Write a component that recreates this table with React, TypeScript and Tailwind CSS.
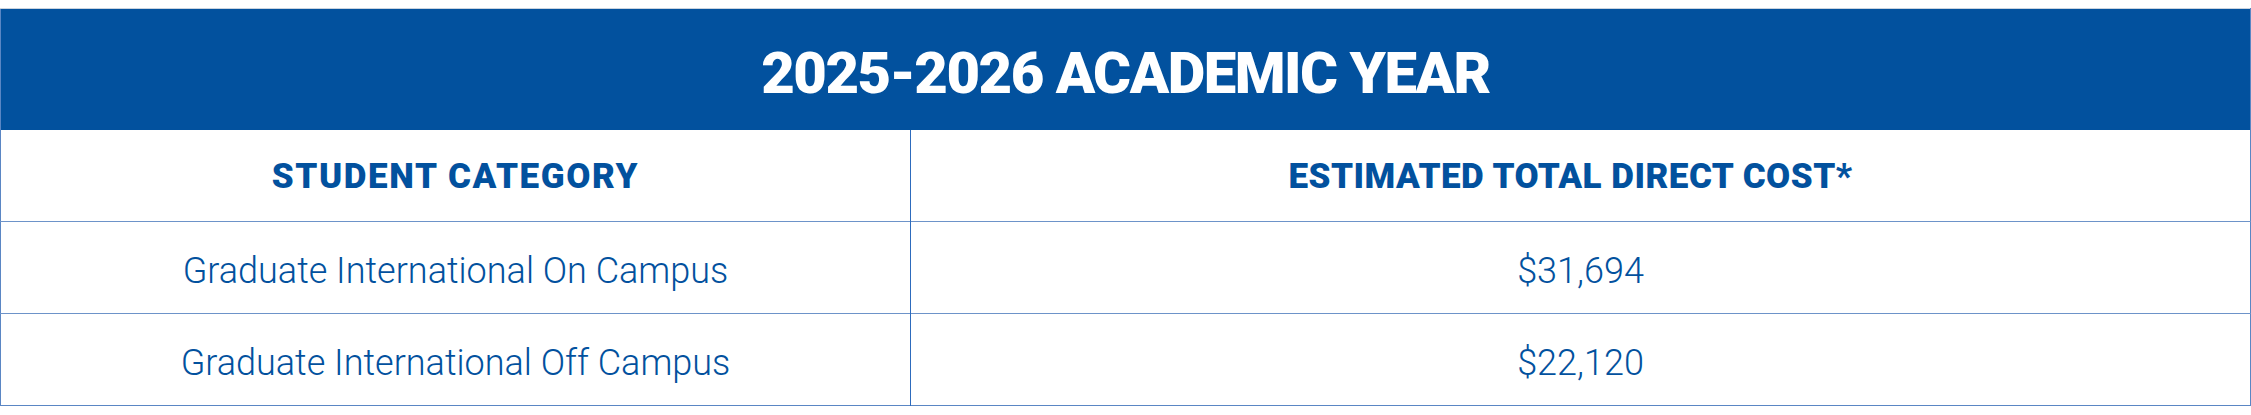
const rows = [
  { category: "Graduate International On Campus", cost: "$31,694" },
  { category: "Graduate International Off Campus", cost: "$22,120" },
];

export default function App() {
  return (
    <div className="min-h-screen bg-white pt-[8px] font-['Roboto',sans-serif]">
      <table className="w-full border-collapse border border-[#5a86c4] border-t-[#c9d3df]">
        <thead>
          <tr>
            <th
              colSpan={2}
              className="h-[121px] bg-[#02519e] pt-[8px] text-center text-[58px] font-black uppercase leading-none tracking-[-1.5px] text-white"
            >
              2025-2026 Academic Year
            </th>
          </tr>
          <tr className="h-[92px]">
            <th className="w-[910px] border-r border-[#2d6bbd] pt-[2px] text-center text-[35px] font-black uppercase leading-none tracking-[1.6px] text-[#02519e]">
              Student Category
            </th>
            <th className="pt-[2px] pr-[20px] text-center text-[35px] font-black uppercase leading-none tracking-[0.5px] text-[#02519e]">
              Estimated Total Direct Cost*
            </th>
          </tr>
        </thead>
        <tbody>
          {rows.map((row) => (
            <tr key={row.category} className="h-[92px] border-t border-[#6d93c9]">
              <td className="border-r border-[#2d6bbd] pt-[6px] text-center text-[36px] font-light leading-none text-[#02519e]">
                {row.category}
              </td>
              <td className="pt-[6px] text-center text-[36px] font-light leading-none text-[#02519e]">
                {row.cost}
              </td>
            </tr>
          ))}
        </tbody>
      </table>
    </div>
  );
}
